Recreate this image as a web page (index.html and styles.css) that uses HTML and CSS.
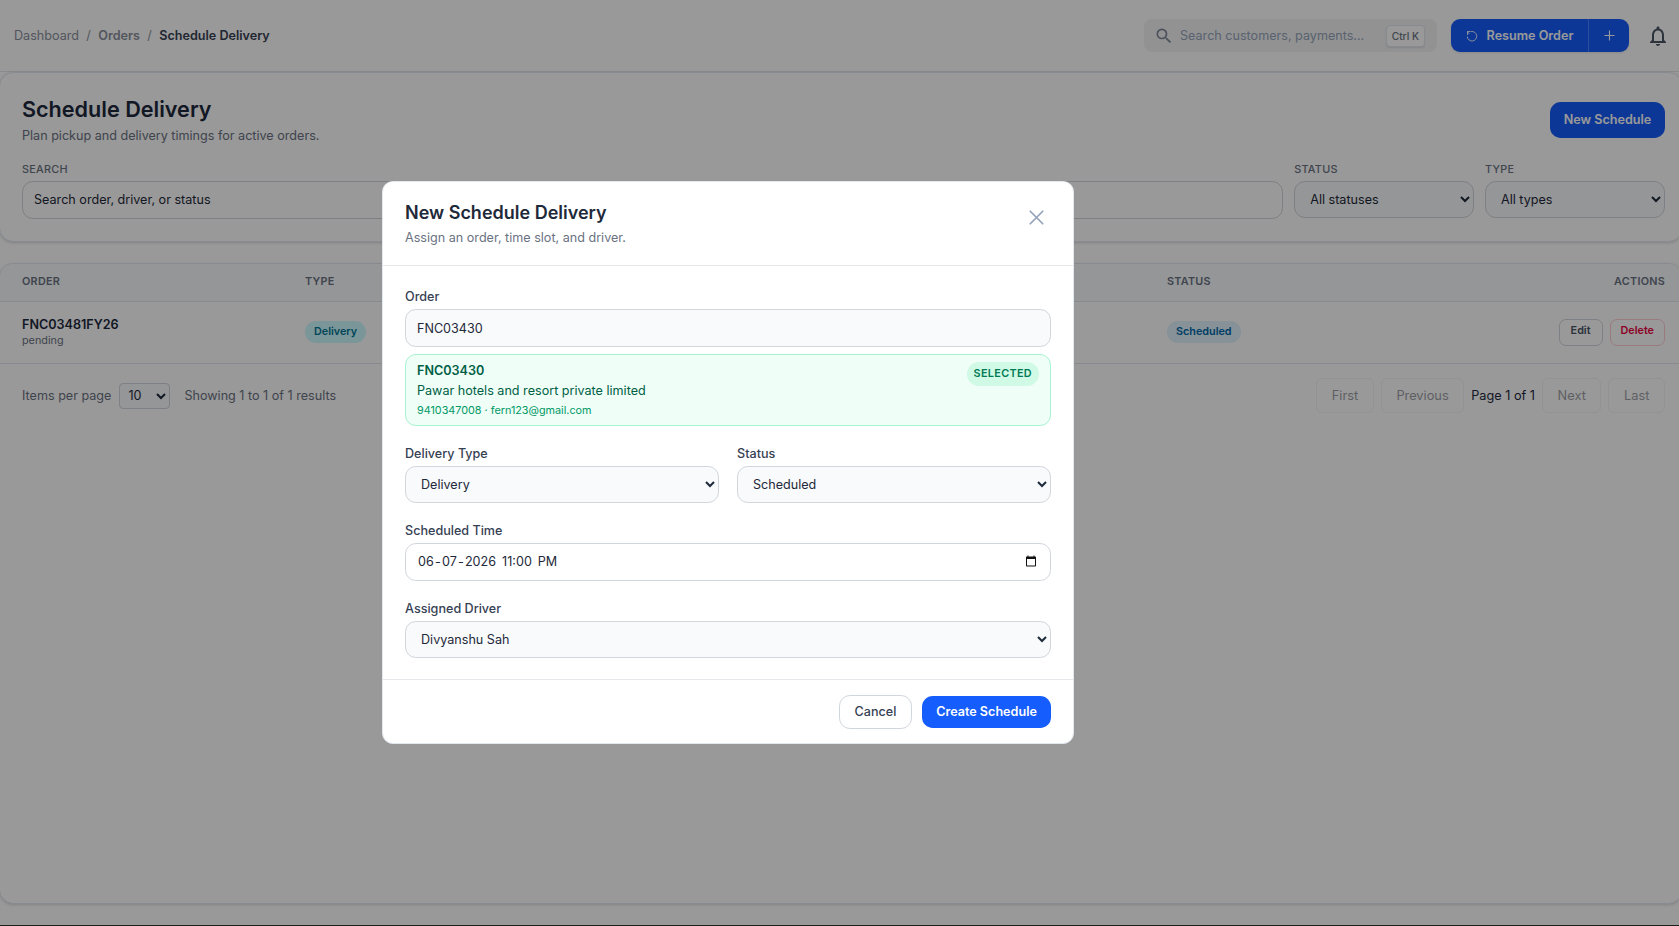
FILE: index.html
```html
<!DOCTYPE html>
<html lang="en">
<head>
    <meta charset="UTF-8">
    <meta name="viewport" content="width=device-width, initial-scale=1.0">
    <title>Schedule Delivery</title>
    <link rel="stylesheet" href="styles.css">
</head>
<body>
    <header class="topbar">
        <nav class="breadcrumb">
            <a>Dashboard</a><span>/</span><a class="parent">Orders</a><span>/</span><strong>Schedule Delivery</strong>
        </nav>
        <div class="topbar-actions">
            <div class="global-search">
                <svg class="search-icon" viewBox="0 0 24 24"><path d="M15.5 14h-.79l-.28-.27A6.47 6.47 0 0 0 16 9.5 6.5 6.5 0 1 0 9.5 16c1.61 0 3.09-.59 4.23-1.57l.27.28v.79l5 4.99L20.49 19l-4.99-5zm-6 0C7.01 14 5 11.99 5 9.5S7.01 5 9.5 5 14 7.01 14 9.5 11.99 14 9.5 14z"/></svg>
                <span class="global-text">Search customers, payments...</span>
                <kbd>Ctrl K</kbd>
            </div>
            <div class="resume">
                <button class="resume-main">
                    <svg viewBox="0 0 24 24"><path d="M9 3H3v7M3 4l4 3M10 3.200a9.500 9.500 0 1 1-7.500 10"/></svg>
                    Resume Order
                </button>
                <button class="resume-add"><svg viewBox="0 0 24 24"><path d="M12 4v16M4 12h16"/></svg></button>
            </div>
            <svg class="bell" viewBox="0 0 24 24"><path d="M12 22c1.1 0 2-.9 2-2h-4c0 1.1.9 2 2 2zm6-6v-5c0-3.07-1.63-5.64-4.5-6.32V4c0-.83-.67-1.5-1.5-1.5s-1.5.67-1.5 1.5v.68C7.64 5.36 6 7.92 6 11v5l-2 2v1h16v-1l-2-2zm-2 1H8v-6c0-2.48 1.51-4.5 4-4.5s4 2.02 4 4.5v6z"/></svg>
        </div>
    </header>

    <section class="card filters">
        <div class="page-head">
            <div>
                <h1>Schedule Delivery</h1>
                <p>Plan pickup and delivery timings for active orders.</p>
            </div>
            <button class="btn btn-primary btn-new">New Schedule</button>
        </div>
        <div class="filter-row">
            <label class="filter filter-search">Search
                <input type="text" placeholder="Search order, driver, or status">
            </label>
            <label class="filter">Status
                <select><option>All statuses</option></select>
            </label>
            <label class="filter">Type
                <select><option>All types</option></select>
            </label>
        </div>
    </section>

    <section class="card list">
        <table>
            <thead>
                <tr>
                    <th class="col-order">Order</th>
                    <th class="col-type">Type</th>
                    <th class="col-status">Status</th>
                    <th class="col-actions">Actions</th>
                </tr>
            </thead>
            <tbody>
                <tr>
                    <td><div class="order-no">FNC03481FY26</div><div class="order-state">pending</div></td>
                    <td><span class="pill pill-cyan">Delivery</span></td>
                    <td><span class="pill pill-sky">Scheduled</span></td>
                    <td>
                        <div class="row-actions">
                            <button class="btn-small">Edit</button>
                            <button class="btn-small btn-delete">Delete</button>
                        </div>
                    </td>
                </tr>
            </tbody>
        </table>
        <div class="pagination">
            <div class="page-size">
                <span>Items per page</span>
                <select><option>10</option></select>
                <span class="showing">Showing 1 to 1 of 1 results</span>
            </div>
            <div class="pages">
                <button disabled>First</button>
                <button disabled>Previous</button>
                <span>Page 1 of 1</span>
                <button disabled>Next</button>
                <button disabled>Last</button>
            </div>
        </div>
    </section>

    <div class="bottom-edge"></div>

    <div class="overlay">
        <div class="modal">
            <div class="modal-head">
                <div>
                    <h2>New Schedule Delivery</h2>
                    <p>Assign an order, time slot, and driver.</p>
                </div>
                <button class="close"><svg viewBox="0 0 24 24"><path d="M6 18L18 6M6 6l12 12"/></svg></button>
            </div>
            <div class="modal-body">
                <div class="field">
                    <label>Order</label>
                    <input class="order-input" type="text" value="FNC03430">
                    <div class="selected-order">
                        <div>
                            <div class="selected-no">FNC03430</div>
                            <div class="selected-name">Pawar hotels and resort private limited</div>
                            <div class="selected-contact">9410347008 · fern123@gmail.com</div>
                        </div>
                        <span class="selected-tag">Selected</span>
                    </div>
                </div>
                <div class="two-cols">
                    <div class="field">
                        <label>Delivery Type</label>
                        <select><option>Delivery</option></select>
                    </div>
                    <div class="field">
                        <label>Status</label>
                        <select><option>Scheduled</option></select>
                    </div>
                </div>
                <div class="field">
                    <label>Scheduled Time</label>
                    <div class="datetime">
                        <span>06<i>-</i>07<i>-</i>2026<b></b>11:00<b></b>PM</span>
                        <svg viewBox="0 0 24 24"><path d="M20 3h-1V1h-2v2H7V1H5v2H4c-1.1 0-2 .9-2 2v16c0 1.1.9 2 2 2h16c1.1 0 2-.9 2-2V5c0-1.1-.9-2-2-2zm0 18H4V8h16v13z"/></svg>
                    </div>
                </div>
                <div class="field">
                    <label>Assigned Driver</label>
                    <select><option>Divyanshu Sah</option></select>
                </div>
            </div>
            <div class="modal-foot">
                <button class="btn btn-cancel">Cancel</button>
                <button class="btn btn-primary btn-create">Create Schedule</button>
            </div>
        </div>
    </div>
</body>
</html>
```

FILE: styles.css
```css
* {
    box-sizing: border-box;
}
html {
    font-size: 14.4px;
}
body {
    margin: 0;
    height: 926px;
    overflow: hidden;
    display: flex;
    flex-direction: column;
    font-family: Inter, "Liberation Sans", sans-serif;
    font-size: 12.6px;
    line-height: 18px;
    color: #1e293b;
    background: #fff;
}
button, input, select {
    font: inherit;
    color: inherit;
}
h1, h2, p {
    margin: 0;
}
button {
    padding: 0;
    border: 0;
    background: none;
    white-space: nowrap;
}

/* Top bar */
.topbar {
    flex: none;
    display: flex;
    align-items: center;
    justify-content: space-between;
    height: 72px;
    padding: 0 9px 0 14px;
    border-bottom: 1px solid #e5e7eb;
}
.breadcrumb {
    display: flex;
    gap: 7.4px;
    color: #8a909b;
}
.breadcrumb .parent {
    font-weight: 600;
}
.breadcrumb strong {
    font-weight: 600;
    color: #364153;
}
.topbar-actions {
    display: flex;
    align-items: center;
}
.global-search {
    display: flex;
    align-items: center;
    width: 293px;
    height: 33px;
    padding: 0 12px 0 10px;
    border-radius: 8px;
    background: #f3f4f6;
    color: #94a3b8;
}
.search-icon {
    width: 20px;
    height: 20px;
    fill: #7c8798;
}
.global-text {
    flex: 1;
    margin-left: 6px;
}
kbd {
    padding: 1px 5px;
    border: 1px solid #e5e7eb;
    border-radius: 4px;
    background: #fff;
    box-shadow: 0 1px 2px rgba(0, 0, 0, 0.1);
    font-family: inherit;
    font-size: 10.2px;
    font-weight: 500;
    color: #6b7280;
}
.resume {
    display: flex;
    height: 33px;
    margin: 0 17px 0 14px;
    border-radius: 9px;
    background: #155dfc;
    color: #fff;
    font-weight: 600;
    overflow: hidden;
    box-shadow: 0 1px 2px rgba(0, 0, 0, 0.1);
}
.resume-main {
    display: flex;
    align-items: center;
    justify-content: center;
    gap: 9px;
    width: 138px;
    border-right: 1px solid #4b83fd;
}
.resume-main svg, .resume-add svg {
    width: 12px;
    height: 12px;
    fill: none;
    stroke: #fff;
    stroke-width: 1.8;
}
.resume-add {
    width: 40px;
    display: flex;
    align-items: center;
    justify-content: center;
}
.resume-add svg {
    width: 15px;
    height: 15px;
}
.bell {
    width: 24px;
    height: 24px;
    fill: #4a5565;
}

/* Cards */
.card {
    flex: none;
    margin: 0 -4px 0 -1px;
    border: 1px solid #e2e8f0;
    border-radius: 14.4px;
    background: #fff;
    box-shadow: 0 1px 3px rgba(0, 0, 0, 0.15);
}
.filters {
    height: 170px;
    padding: 19px 17px 0 22px;
}
.page-head {
    display: flex;
    justify-content: space-between;
}
.page-head h1 {
    margin-top: 3px;
    font-size: 21.6px;
    line-height: 28px;
    font-weight: 600;
    color: #1d293d;
}
.page-head p {
    margin-top: 4px;
    color: #6a7282;
}
.btn {
    border-radius: 10.8px;
    font-weight: 600;
}
.btn-primary {
    background: #155dfc;
    color: #fff;
}
.btn-new {
    width: 115px;
    height: 36px;
    margin-top: 10px;
}
.filter-row {
    display: flex;
    gap: 10.8px;
    margin-top: 18px;
}
.filter {
    width: 180px;
    font-size: 10.8px;
    line-height: 14px;
    font-weight: 500;
    letter-spacing: 0.27px;
    text-transform: uppercase;
    color: #6a7282;
}
.filter-search {
    flex: 1;
}
.filter input, .filter select, .field input, .field select, .datetime {
    display: block;
    width: 100%;
    height: 37px;
    margin-top: 4px;
    padding: 0 11px;
    border: 1px solid #d1d5dc;
    border-radius: 10.8px;
    background: #f8fafc;
    font-size: 12.6px;
    font-weight: 400;
    letter-spacing: 0;
    color: #1e2939;
}
.filter input {
    height: 38px;
    padding-bottom: 1px;
    background: #fff;
}
.filter input::placeholder {
    color: #1e2939;
    opacity: 1;
}

/* Schedule table */
.list {
    height: 641px;
    margin-top: 21px;
    overflow: hidden;
}
table {
    width: 100%;
    border-collapse: collapse;
    table-layout: fixed;
}
th, td {
    padding: 0 0 0 22px;
    text-align: left;
    border-bottom: 1px solid #e2e8f0;
}
th {
    height: 37px;
    background: #f8fafc;
    font-size: 10.8px;
    font-weight: 600;
    letter-spacing: 0.27px;
    text-transform: uppercase;
    color: #6a7282;
}
td {
    height: 62px;
}
.col-order {
    width: 283px;
}
.col-type {
    width: 862px;
}
.col-status {
    width: 300px;
}
th.col-actions {
    text-align: right;
    padding-right: 17px;
}
.order-no {
    font-weight: 600;
    line-height: 16px;
    color: #1d293d;
}
.order-state {
    font-size: 10.8px;
    line-height: 15px;
    color: #6a7282;
}
.pill {
    display: inline-block;
    padding: 0 9px;
    border-radius: 11px;
    font-size: 10.8px;
    line-height: 22px;
    font-weight: 600;
}
.pill-cyan {
    background: #cefafe;
    color: #007595;
}
.pill-sky {
    background: #dff2fe;
    color: #0069a8;
}
.row-actions {
    display: flex;
    justify-content: flex-end;
    gap: 7px;
    padding-right: 17px;
}
.btn-small {
    height: 27px;
    padding: 0 11px 2px;
    border: 1px solid #d1d5dc;
    border-radius: 7px;
    font-size: 10.8px;
    font-weight: 600;
    color: #4a5565;
}
.btn-delete {
    border-color: #ffccd3;
    color: #ec003f;
    padding: 0 10px 2px;
}
.pagination {
    display: flex;
    align-items: center;
    justify-content: space-between;
    height: 64px;
    padding: 0 17px 0 22px;
    color: #6a7282;
}
.page-size, .pages {
    display: flex;
    align-items: center;
}
.page-size select {
    width: 51px;
    height: 26px;
    margin: 0 14px 0 8px;
    padding-left: 4px;
    border: 1px solid #d1d5dc;
    border-radius: 4px;
    background: #f8fafc;
    color: #1e293b;
}
.pages {
    gap: 7px;
}
.pages span {
    font-size: 12.7px;
    color: #1d293d;
}
.pages button {
    height: 35px;
    padding: 0 14.6px;
    border: 1px solid #e5e7eb;
    border-radius: 6px;
    font-size: 12.8px;
    color: #1e2939;
    opacity: 0.45;
}
.bottom-edge {
    height: 1px;
    margin-top: auto;
    background: #333;
}

/* Modal */
.overlay {
    position: fixed;
    inset: 0;
    display: flex;
    align-items: center;
    justify-content: center;
    padding: 0 223px 1px 0;
    background: rgba(0, 0, 0, 0.4);
}
.modal {
    flex: none;
    width: 692px;
    height: 563px;
    border: 1px solid #e2e8f0;
    border-radius: 10.8px;
    background: #fff;
}
.modal-head {
    display: flex;
    justify-content: space-between;
    height: 84px;
    padding: 18px 22px 0;
    border-bottom: 1px solid #e5e7eb;
}
.modal-head h2 {
    font-size: 18px;
    line-height: 25px;
    font-weight: 600;
    color: #1e2939;
}
.modal-head p {
    margin-top: 4px;
    color: #6a7282;
}
.close {
    width: 29px;
    height: 29px;
    margin-top: 5px;
}
.close svg {
    width: 25px;
    height: 25px;
    fill: none;
    stroke: #90a1b9;
    stroke-width: 1.6;
    stroke-linecap: round;
}
.modal-body {
    display: flex;
    flex-direction: column;
    gap: 18px;
    height: 413px;
    padding: 21px 22px 0;
}
.field label {
    display: block;
    padding-top: 1px;
    margin-bottom: -1px;
    font-weight: 500;
    color: #364153;
}
.field input {
    height: 38px;
}
.field select {
    height: 37px;
}
.two-cols {
    display: grid;
    grid-template-columns: 1fr 1fr;
    gap: 18px;
}
.selected-order {
    display: flex;
    justify-content: space-between;
    align-items: flex-start;
    height: 72px;
    margin-top: 7px;
    padding: 7px 11px;
    border: 1px solid #a4f4cf;
    border-radius: 10.8px;
    background: #effef7;
    color: #007a55;
}
.selected-no {
    font-weight: 600;
    color: #006045;
}
.selected-name {
    margin-top: 2px;
    color: #006045;
}
.selected-contact {
    margin-top: 2px;
    font-size: 10.8px;
    color: #009966;
}
.selected-tag {
    padding: 0 7px;
    border-radius: 12px;
    background: #d0fae5;
    font-size: 10.8px;
    line-height: 24px;
    font-weight: 600;
    letter-spacing: 0.36px;
    text-transform: uppercase;
}
.field .datetime {
    display: flex;
    align-items: center;
    justify-content: space-between;
    height: 38px;
    padding: 0 13px 0 12px;
    background: #fff;
}
.datetime i {
    padding: 0 1.2px;
    font-style: normal;
}
.datetime b {
    display: inline-block;
    width: 6px;
}
.datetime svg {
    width: 12px;
    height: 12px;
    margin-bottom: 2px;
    fill: #111;
}
.modal-foot {
    display: flex;
    align-items: center;
    justify-content: flex-end;
    gap: 10px;
    height: 64px;
    padding: 0 22px;
    border-top: 1px solid #e5e7eb;
}
.btn-cancel {
    width: 73px;
    height: 34px;
    border: 1px solid #d1d5dc;
    font-weight: 500;
    color: #364153;
}
.btn-create {
    width: 129px;
    height: 32px;
}
```
